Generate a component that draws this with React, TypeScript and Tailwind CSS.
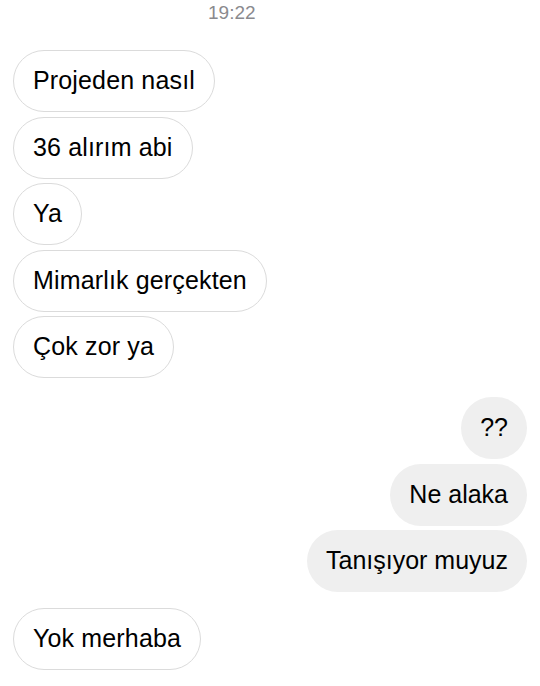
const LEFT_TOP = ["Projeden nasıl", "36 alırım abi", "Ya", "Mimarlık gerçekten", "Çok zor ya"];
const RIGHT = ["??", "Ne alaka", "Tanışıyor muyuz"];

function Incoming({ text }: { text: string }) {
  return (
    <div className="flex">
      <div className="flex h-[62px] min-w-[62px] items-center justify-center rounded-full border border-[#dbdbdb] bg-white px-[19px] text-[25px] tracking-[0.15px] text-black">
        {text}
      </div>
    </div>
  );
}

function Outgoing({ text }: { text: string }) {
  return (
    <div className="flex justify-end">
      <div className="flex h-[62px] min-w-[64px] items-center justify-center rounded-full bg-[#efefef] px-[19px] text-[25px] text-black">
        {text}
      </div>
    </div>
  );
}

export default function App() {
  return (
    <div
      className="h-[686px] w-[540px] overflow-hidden bg-white pt-[2px]"
      style={{ fontFamily: '"Liberation Sans", Arial, sans-serif' }}
    >
      <div className="h-[22px] pl-[208px] text-[19px] leading-[22px] text-[#8a8a8e]">19:22</div>

      <div className="mt-[26px] flex flex-col gap-[4.5px] px-[13px]">
        {LEFT_TOP.map((t) => (
          <Incoming key={t} text={t} />
        ))}
      </div>

      <div className="mt-[19px] flex flex-col gap-[4.5px] px-[13px]">
        {RIGHT.map((t) => (
          <Outgoing key={t} text={t} />
        ))}
      </div>

      <div className="mt-[16px] flex flex-col px-[13px]">
        <Incoming text="Yok merhaba" />
      </div>
    </div>
  );
}
